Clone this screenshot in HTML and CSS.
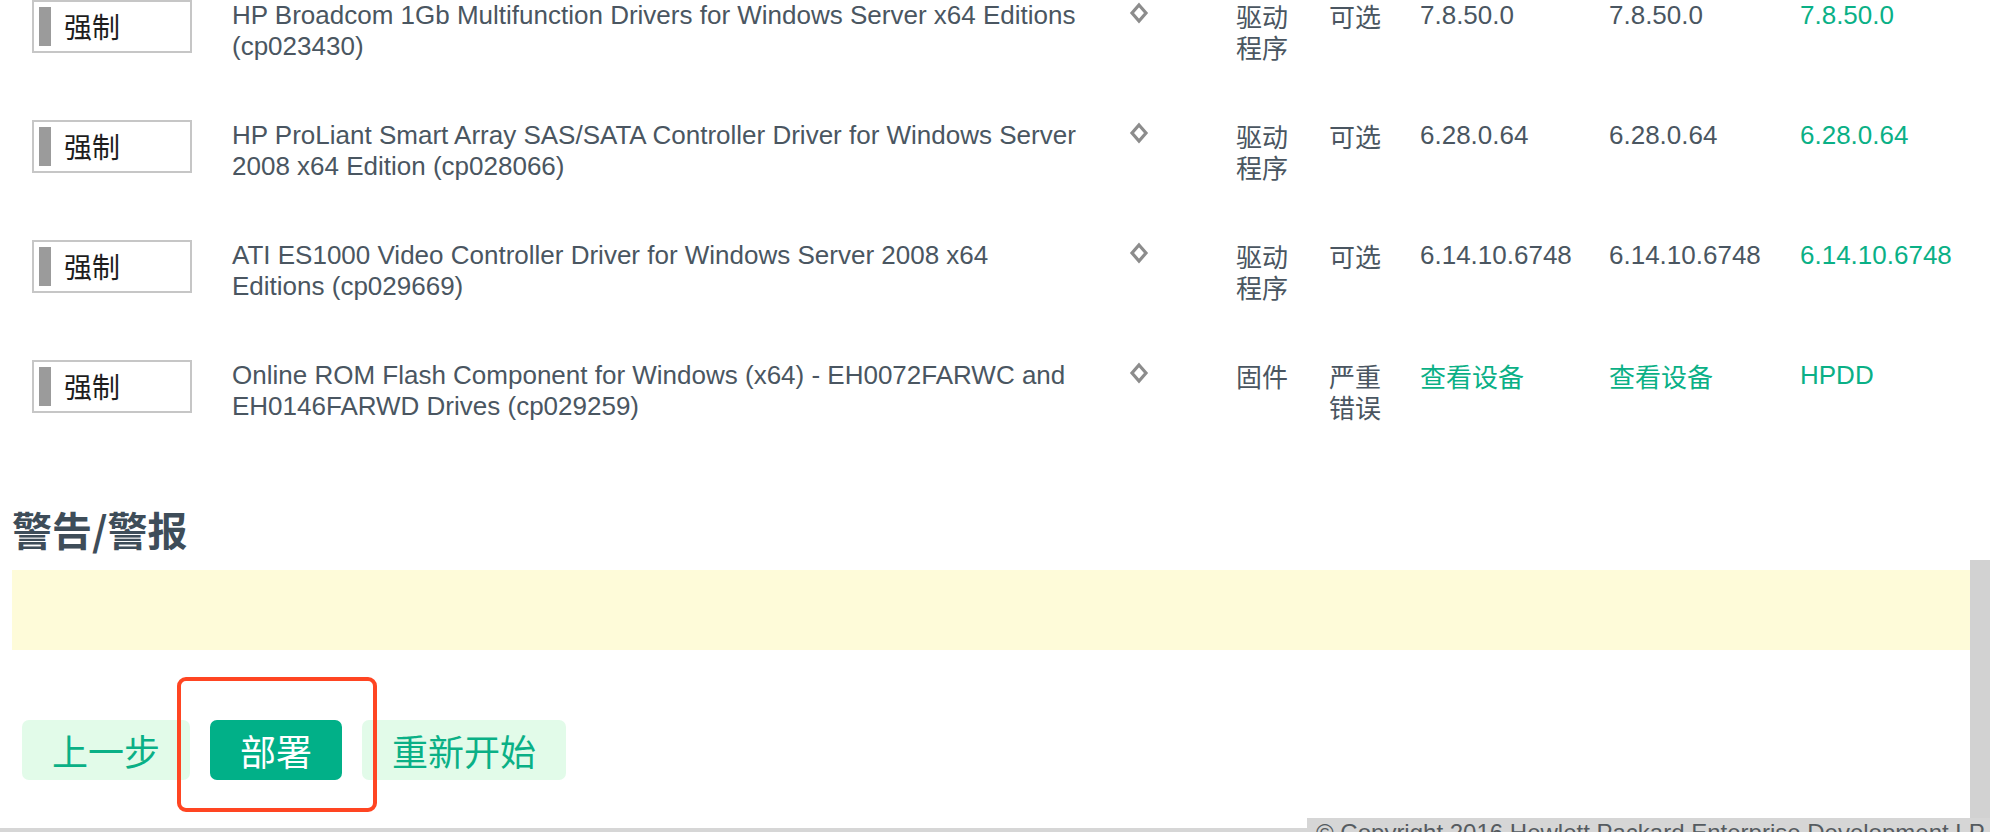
FILE: index.html
```html
<!DOCTYPE html>
<html lang="zh-CN">
<head>
<meta charset="utf-8">
<title>部署</title>
<link rel="stylesheet" href="styles.css">
</head>
<body>
<div class="screen">
  <div class="viewport">
    <main class="content">
      <div class="rows">
        <div class="row">
          <div class="badge"><span class="badge-bar"></span><span class="badge-text">强制</span></div>
          <div class="desc">HP Broadcom 1Gb Multifunction Drivers for Windows Server x64 Editions<br>(cp023430)</div>
          <div class="sort"><svg width="20" height="22" viewBox="0 0 20 22"><polygon points="10,3 17,11 10,19 3,11" fill="none" stroke="#8c8c8c" stroke-width="3.2"/></svg></div>
          <div class="cell cjk">驱动<br>程序</div>
          <div class="cell cjk">可选</div>
          <div class="cell">7.8.50.0</div>
          <div class="cell">7.8.50.0</div>
          <div class="cell green">7.8.50.0</div>
        </div>
        <div class="row">
          <div class="badge"><span class="badge-bar"></span><span class="badge-text">强制</span></div>
          <div class="desc">HP ProLiant Smart Array SAS/SATA Controller Driver for Windows Server<br>2008 x64 Edition (cp028066)</div>
          <div class="sort"><svg width="20" height="22" viewBox="0 0 20 22"><polygon points="10,3 17,11 10,19 3,11" fill="none" stroke="#8c8c8c" stroke-width="3.2"/></svg></div>
          <div class="cell cjk">驱动<br>程序</div>
          <div class="cell cjk">可选</div>
          <div class="cell">6.28.0.64</div>
          <div class="cell">6.28.0.64</div>
          <div class="cell green">6.28.0.64</div>
        </div>
        <div class="row">
          <div class="badge"><span class="badge-bar"></span><span class="badge-text">强制</span></div>
          <div class="desc">ATI ES1000 Video Controller Driver for Windows Server 2008 x64<br>Editions (cp029669)</div>
          <div class="sort"><svg width="20" height="22" viewBox="0 0 20 22"><polygon points="10,3 17,11 10,19 3,11" fill="none" stroke="#8c8c8c" stroke-width="3.2"/></svg></div>
          <div class="cell cjk">驱动<br>程序</div>
          <div class="cell cjk">可选</div>
          <div class="cell">6.14.10.6748</div>
          <div class="cell">6.14.10.6748</div>
          <div class="cell green">6.14.10.6748</div>
        </div>
        <div class="row">
          <div class="badge"><span class="badge-bar"></span><span class="badge-text">强制</span></div>
          <div class="desc">Online ROM Flash Component for Windows (x64) - EH0072FARWC and<br>EH0146FARWD Drives (cp029259)</div>
          <div class="sort"><svg width="20" height="22" viewBox="0 0 20 22"><polygon points="10,3 17,11 10,19 3,11" fill="none" stroke="#8c8c8c" stroke-width="3.2"/></svg></div>
          <div class="cell cjk">固件</div>
          <div class="cell cjk">严重<br>错误</div>
          <div class="cell cjk green">查看设备</div>
          <div class="cell cjk green">查看设备</div>
          <div class="cell green">HPDD</div>
        </div>
      </div>

      <section class="alerts">
        <h2 class="alerts-title">警告/警报</h2>
        <div class="alerts-box"></div>
      </section>

      <div class="actions">
        <button class="btn btn-light">上一步</button>
        <span class="btn-wrap">
          <button class="btn btn-primary">部署</button>
          <span class="highlight"></span>
        </span>
        <button class="btn btn-light">重新开始</button>
      </div>
    </main>
    <div class="track"><div class="thumb"></div></div>
  </div>
  <footer class="footer">
    <div class="footer-left"></div>
    <div class="footer-right">© Copyright 2016 Hewlett Packard Enterprise Development LP</div>
  </footer>
</div>
</body>
</html>
```

FILE: styles.css
```css
html, body {
  margin: 0;
  padding: 0;
  background: #ffffff;
}

body {
  font-family: "Liberation Sans", Arial, "Noto Sans CJK SC", sans-serif;
  font-size: 26px;
  color: #4a5661;
}

.screen {
  width: 1990px;
  height: 832px;
  display: flex;
  flex-direction: column;
  overflow: hidden;
}

.viewport {
  height: 818px;
  display: flex;
  overflow: hidden;
}

.content {
  width: 1970px;
  flex: none;
  overflow: hidden;
}

.track {
  width: 20px;
  flex: none;
}

.thumb {
  margin-top: 560px;
  height: 258px;
  background: #d2d2d2;
}

/* table rows */
.rows {
  display: flex;
  flex-direction: column;
}

.row {
  height: 120px;
  display: grid;
  grid-template-columns: 200px 897px 107px 93px 91px 189px 191px 1fr;
  padding-left: 32px;
  align-items: start;
  line-height: 31px;
}

.badge {
  box-sizing: border-box;
  width: 160px;
  height: 53px;
  border: 2px solid #c6c6c6;
  display: flex;
  align-items: center;
  padding-left: 5px;
  gap: 13px;
  background: #fff;
}

.badge-bar {
  width: 12px;
  height: 39px;
  background: #9b9b9b;
  flex: none;
}

.badge-text {
  font-family: "Noto Sans CJK SC", sans-serif;
  font-size: 28px;
  color: #1e1e1e;
  line-height: 31px;
}

.desc {
  white-space: nowrap;
}

.sort {
  padding-top: 2px;
  line-height: 0;
}

.cell {
  white-space: nowrap;
}

.cjk {
  font-family: "Noto Sans CJK SC", sans-serif;
  font-size: 26px;
}

.green {
  color: #0ab086;
}

/* alerts */
.alerts {
  padding-left: 12px;
  margin-top: 25px;
}

.alerts-title {
  margin: 0;
  font-family: "Noto Sans CJK SC", sans-serif;
  font-weight: 700;
  font-size: 40px;
  line-height: 48px;
  color: #3e4d59;
}

.alerts-box {
  margin-top: 17px;
  height: 80px;
  background: #fefbd9;
}

/* actions */
.actions {
  display: flex;
  align-items: center;
  gap: 20px;
  margin-top: 70px;
  padding-left: 22px;
}

.btn {
  height: 60px;
  padding: 0 30px;
  border: 0;
  border-radius: 7px;
  font-family: "Noto Sans CJK SC", sans-serif;
  font-size: 36px;
  line-height: 60px;
  cursor: pointer;
}

.btn-light {
  background: #e2fbe9;
  color: #0ab086;
}

.btn-primary {
  background: #01b088;
  color: #ffffff;
}

.btn-wrap {
  position: relative;
  display: inline-flex;
}

.highlight {
  position: absolute;
  left: -33px;
  top: -43px;
  width: 200px;
  height: 135px;
  box-sizing: border-box;
  border: 4px solid #ff4522;
  border-radius: 9px;
  pointer-events: none;
}

/* footer */
.footer {
  height: 14px;
  display: flex;
}

.footer-left {
  width: 1307px;
  flex: none;
  box-sizing: border-box;
  border-bottom: 4px solid #d6d6d6;
}

.footer-right {
  flex: 1;
  background: #d6d6d6;
  overflow: hidden;
  white-space: nowrap;
  padding-left: 9px;
  font-size: 24px;
  line-height: 30px;
  color: #555b60;
}
```
